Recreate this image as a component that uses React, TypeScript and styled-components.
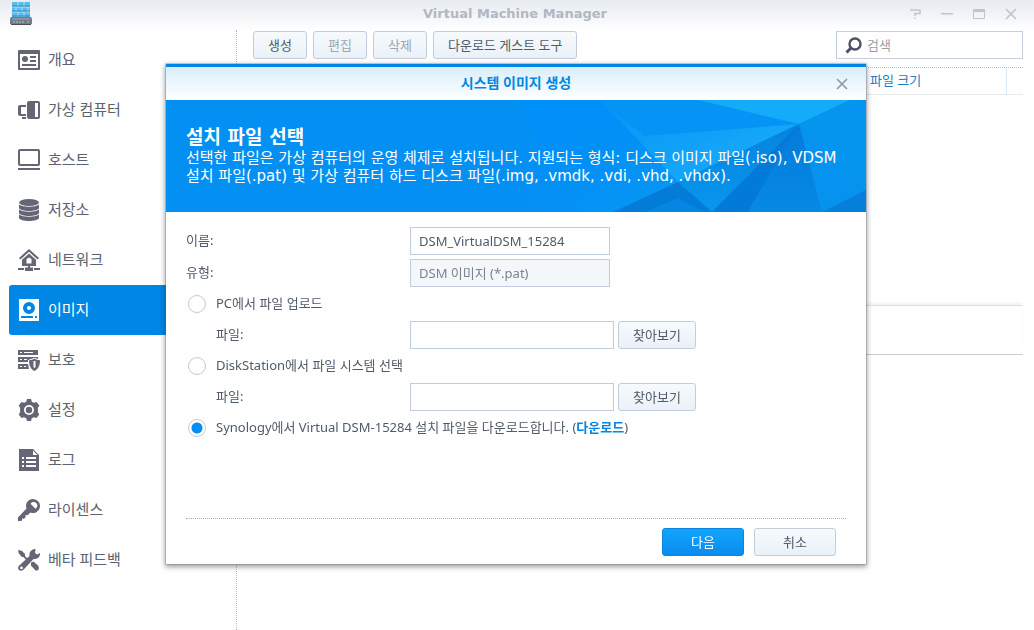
import React from "react";
import styled, { createGlobalStyle, css } from "styled-components";

const GlobalStyle = createGlobalStyle`
  *, *::before, *::after { box-sizing: border-box; }
  html, body { margin: 0; padding: 0; }
  body, button, input {
    font-family: "Noto Sans", "Noto Sans CJK KR", sans-serif;
    font-size: 13px;
    line-height: 18px;
    color: #505a68;
  }
  body { background: #fff; word-break: keep-all; }
`;

const Window = styled.div`
  display: flex;
  flex-direction: column;
  min-height: 100vh;
  background: #fff;
`;

const TitleBar = styled.header`
  display: grid;
  grid-template-columns: 1fr auto 1fr;
  align-items: center;
  height: 30px;
  padding: 0 14px 2px 10px;
  background: linear-gradient(#e8ecf1, #eef1f5 35%, #ffffff);
`;

const AppTitle = styled.h1`
  margin: 0;
  font-family: "DejaVu Sans", sans-serif;
  font-size: 13px;
  font-weight: bold;
  line-height: 18px;
  color: #b1b8bf;
`;

const WindowControls = styled.div`
  display: flex;
  justify-content: flex-end;
  gap: 14px;
`;

const IconButton = styled.button<{ $tone: string }>`
  display: flex;
  align-items: center;
  justify-content: center;
  width: 18px;
  height: 18px;
  padding: 0;
  border: 0;
  background: none;
  color: ${(p) => p.$tone};
`;

const Columns = styled.div`
  display: flex;
  flex: 1;
`;

const Sidebar = styled.nav`
  flex: 0 0 237px;
  padding: 5px 0 0 9px;
  border-right: 1px dotted #b4b9c2;
`;

const NavItem = styled.a<{ $active?: boolean }>`
  display: flex;
  align-items: center;
  gap: 8px;
  height: 50px;
  padding: 0 9px;
  font-size: 15px;
  line-height: 20px;
  text-decoration: none;
  color: #5a6370;
  border-radius: 3px 0 0 3px;
  svg { color: #646675; }
  span { padding-bottom: 2px; }
  ${(p) =>
    p.$active &&
    css`
      background: #0086e5;
      color: #fff;
      svg { color: #fff; }
    `}
`;

const Main = styled.main`
  flex: 1;
  display: flex;
  flex-direction: column;
  min-width: 0;
  padding: 1px 11px 0 0;
`;

const Toolbar = styled.div`
  display: flex;
  gap: 6px;
  padding: 0 0 8px 16px;
`;

const PlainButton = styled.button<{ $wide?: boolean }>`
  height: 28px;
  min-width: ${(p) => (p.$wide ? "82px" : "54px")};
  padding: 0 14px;
  border: 1px solid #c3ccda;
  border-radius: 3px;
  background: linear-gradient(#f7fafd, #eaf1f7);
  white-space: nowrap;
  &:disabled { color: #9aa6b2; }
`;

const PrimaryButton = styled(PlainButton)`
  border-color: #0a84e0;
  background: linear-gradient(#12a5fa, #0a8bf0);
  color: #fff;
`;

const SearchBox = styled.label`
  display: flex;
  align-items: center;
  gap: 5px;
  width: 187px;
  height: 28px;
  margin-left: auto;
  padding: 0 8px;
  border: 1px solid #c6ceda;
  background: #fff;
  color: #4b5263;
`;

const SearchInput = styled.input`
  flex: 1;
  min-width: 0;
  padding: 0;
  border: 0;
  outline: 0;
  background: none;
  &::placeholder { color: #98a0aa; opacity: 1; }
`;

const ListArea = styled.section`
  min-height: 238px;
`;

const ListTable = styled.table`
  width: 100%;
  table-layout: fixed;
  border-collapse: separate;
  border-spacing: 0;
  border-top: 1px dotted #b6c0cb;
  border-bottom: 1px solid #e6ebf0;
`;

const ListHead = styled.th<{ $width?: number }>`
  width: ${(p) => (p.$width ? `${p.$width}px` : "auto")};
  height: 26px;
  padding: 0 4px 2px;
  border-right: 1px solid #dce9f3;
  font-weight: normal;
  text-align: left;
  color: #1f7cc4;
  &:last-child { border-right: 0; }
`;

const DetailPanel = styled.section`
  height: 50px;
  border-top: 1px solid #dddfe3;
  border-bottom: 1px solid #c9ccd3;
  box-shadow: 0 -3px 3px -1px #f0f1f3;
`;

const Overlay = styled.div`
  position: fixed;
  inset: 0;
  display: flex;
  align-items: flex-start;
  padding: 64px 168px 0 166px;
`;

const Dialog = styled.div`
  flex: 1;
  min-width: 0;
  border-top: 3px solid #0086e5;
  background: #fff;
  box-shadow: 0 0 0 1px rgba(80, 90, 110, 0.25), 0 2px 5px 1px rgba(40, 45, 60, 0.45);
`;

const DialogHeader = styled.header`
  display: grid;
  grid-template-columns: 1fr auto 1fr;
  align-items: center;
  height: 33px;
  padding: 0 15px;
  background: linear-gradient(#d9eefb, #ffffff);
  h2 {
    grid-column: 2;
    margin: 0;
    padding-bottom: 2px;
    font-size: 14px;
    line-height: 18px;
    font-weight: bold;
    color: #0086e5;
  }
  button { justify-self: end; }
`;

const Banner = styled.div`
  position: relative;
  height: 112px;
  padding: 25px 20px 0;
  background: #048ff2;
  color: #fff;
  font-family: "DejaVu Sans", "Noto Sans CJK KR", sans-serif;
  overflow: hidden;
  h3, p { position: relative; margin: 0; }
  h3 { font-size: 19px; line-height: 24px; font-weight: bold; }
  p { font-size: 15px; line-height: 18px; }
`;

const BannerArt = styled.svg`
  position: absolute;
  top: 0;
  right: 0;
  width: 440px;
  height: 112px;
`;

const FormBody = styled.form`
  display: flex;
  flex-direction: column;
  gap: 3px;
  min-height: 307px;
  margin: 0 20px;
  padding-top: 15px;
  border-bottom: 1px dotted #a9adb4;
`;

const FieldPair = styled.div`
  display: grid;
  gap: 4px;
`;

const Field = styled.div<{ $indent?: boolean }>`
  display: flex;
  align-items: center;
  gap: 4px;
  height: 28px;
  label {
    flex: 0 0 220px;
    padding-bottom: 2px;
    padding-left: ${(p) => (p.$indent ? "30px" : "0")};
  }
`;

const TextInput = styled.input<{ $short?: boolean }>`
  width: ${(p) => (p.$short ? "200px" : "204px")};
  height: 28px;
  padding: 0 8px;
  border: 1px solid #c3ccda;
  background: #fff;
  outline: 0;
  &:disabled { background: #f4f7fa; color: #7a838e; padding-bottom: 2px; }
`;

const Choice = styled.label`
  display: flex;
  align-items: center;
  gap: 10px;
  height: 28px;
  padding-left: 2px;
  span { padding-bottom: 2px; }
  a { color: #0086e5; font-weight: bold; text-decoration: none; }
`;

const Radio = styled.input.attrs({ type: "radio" })`
  appearance: none;
  width: 18px;
  height: 18px;
  margin: 0;
  border: 1px solid #c0c9d6;
  border-radius: 50%;
  background: #fff;
  &:checked { background: radial-gradient(circle, #0090f5 5px, #fff 6px); }
`;

const DialogFooter = styled.footer`
  display: flex;
  justify-content: flex-end;
  gap: 10px;
  padding: 9px 30px 8px;
`;

type IconProps = { children: React.ReactNode };
const NavIcon = ({ children }: IconProps) => (
  <svg width="22" height="22" viewBox="0 0 22 22" fill="currentColor" aria-hidden="true">
    {children}
  </svg>
);

const icons = {
  overview: (
    <NavIcon>
      <path fillRule="evenodd" d="M1 1h20a1 1 0 0 1 1 1v18a1 1 0 0 1-1 1H1a1 1 0 0 1-1-1V2a1 1 0 0 1 1-1zM2 5v14h18V5z" />
      <circle cx="7" cy="10" r="3" />
      <path d="M12 7h6v2h-6zM12 11h6v2h-6zM4 15h14v2H4z" />
    </NavIcon>
  ),
  vm: (
    <NavIcon>
      <path fillRule="evenodd" d="M11 2h9a2 2 0 0 1 2 2v14a2 2 0 0 1-2 2h-9a2 2 0 0 1-2-2V4a2 2 0 0 1 2-2zm6 2v14h3V4z" />
      <path d="M2 6h6v2H3v7h5v2H2a2 2 0 0 1-2-2V8a2 2 0 0 1 2-2zM4 18h4v2H4z" />
    </NavIcon>
  ),
  host: (
    <NavIcon>
      <path fillRule="evenodd" d="M2 0h18a2 2 0 0 1 2 2v13a2 2 0 0 1-2 2H2a2 2 0 0 1-2-2V2a2 2 0 0 1 2-2zm0 2v13h18V2zM0 19h22v2H0z" />
    </NavIcon>
  ),
  storage: (
    <NavIcon>
      <ellipse cx="11" cy="3.500" rx="10" ry="3.500" />
      <path d="M1 5.500c4 3 16 3 20 0V9c-1 4-19 4-20 0zM1 10.500c4 3 16 3 20 0V14c-1 4-19 4-20 0zM1 15.500c4 3 16 3 20 0V19c-1 4-19 4-20 0z" />
    </NavIcon>
  ),
  network: (
    <NavIcon>
      <path d="M11 0l10 9-1.400 1.500L11 2.800 2.400 10.500 1 9z" />
      <path fillRule="evenodd" d="M11 4.500l7 6.300V17H4v-6.200zM8.500 10v4.500h5V10L11 8.500z" />
      <path d="M0 19h6v2H0zM16 19h6v2h-6zM7 18.500h8V22H7zM10 16h2v3h-2z" />
    </NavIcon>
  ),
  image: (
    <NavIcon>
      <path fillRule="evenodd" d="M1 0h20v22H1zM11 3a6 6 0 1 0 0 12 6 6 0 0 0 0-12zM3 17v2h12v-2zm14 0v2h2v-2z" />
      <circle cx="11" cy="9" r="2" />
    </NavIcon>
  ),
  protection: (
    <NavIcon>
      <path fillRule="evenodd" d="M0 1h20v5H0zM2 3v1h2V3zM6 3v1h9V3zM0 8h20v2l-3.500-1.200L10 11v2H0zm2 2v1h2v-1zm4 0v1h3v-1zM0 15h10l1 5H0zm2 2v1h2v-1zm4 0v1h2v-1z" />
      <path fillRule="evenodd" d="M16.500 9.500c1.500 1.200 3.200 1.700 5.500 1.700 0 5-1.500 8.800-5.500 10.800-4-2-5.500-5.800-5.500-10.800 2.300 0 4-.5 5.500-1.700zM15.500 12v6l1 1 1-1v-6z" />
    </NavIcon>
  ),
  settings: (
    <NavIcon>
      <path
        fillRule="evenodd"
        d="M9 0h4l.8 2.800 2 1L18.500 3l2.800 3.500-1.500 2.400.2 2.100-.2 2.100 1.500 2.400-2.800 3.500-2.700-.8-2 1L13 22H9l-.8-2.800-2-1-2.700.8-2.800-3.500 1.500-2.400L2 11l.2-2.100L.7 6.500 3.500 3l2.700.8 2-1zM11 6a5 5 0 1 0 0 10 5 5 0 0 0 0-10z"
      />
      <circle cx="11" cy="11" r="3.200" />
    </NavIcon>
  ),
  log: (
    <NavIcon>
      <path fillRule="evenodd" d="M1 0h14l6 6v16H1zM4 8v2h2V8zm4 0v2h10V8zm-4 4v2h2v-2zm4 0v2h10v-2zm-4 4v2h2v-2zm4 0v2h10v-2zM15 1.500V6h4.500z" />
    </NavIcon>
  ),
  license: (
    <NavIcon>
      <path
        fillRule="evenodd"
        d="M15 0a7 7 0 1 1-2.600 13.500L9.500 16.300l-2-.2.200 2-1.700 1.600-2-.2.200 1.500-1 1H0v-3.600L8.500 9.600A7 7 0 0 1 15 0zM14 3.200l-1.500 1.500 5 5L19 8.200c1.500-4-2-6-5-5z"
      />
    </NavIcon>
  ),
  feedback: (
    <NavIcon>
      <path d="M1 1l3 1 3 3v2l3 3-1.500 1.500L5.500 8H4L1.200 5 0 2z" />
      <path d="M13 13.500l2.500-1L20 16.500c1.500 2 1 4-.5 5h-2l-4.500-5z" />
      <path
        fillRule="evenodd"
        d="M17.500 0l-.5 4 2 1.500 3-1.500c.3 4-2.500 6.500-6.500 6L5.500 20.700C4 22 2 22 .8 20.800-.3 19.600 0 17.500 1.300 16.500L11.500 7c-.5-4 2-7 6-7zM3.500 17.500a1.400 1.400 0 1 0 0 2.800 1.400 1.400 0 0 0 0-2.800z"
      />
    </NavIcon>
  ),
};

const navItems: { icon: keyof typeof icons; label: string; active?: boolean }[] = [
  { icon: "overview", label: "개요" },
  { icon: "vm", label: "가상 컴퓨터" },
  { icon: "host", label: "호스트" },
  { icon: "storage", label: "저장소" },
  { icon: "network", label: "네트워크" },
  { icon: "image", label: "이미지", active: true },
  { icon: "protection", label: "보호" },
  { icon: "settings", label: "설정" },
  { icon: "log", label: "로그" },
  { icon: "license", label: "라이센스" },
  { icon: "feedback", label: "베타 피드백" },
];

const AppLogo = () => (
  <svg width="22" height="24" viewBox="0 0 22 24" aria-hidden="true">
    <path d="M2 0h18v16H2z" fill="#58bdec" />
    <path d="M2 5h18M2 10h18M8 0v5M14 0v5M6 5v5M12 5v5M18 5v5M8 10v6M14 10v6" stroke="#a9e2fa" strokeWidth="1" />
    <path d="M2 4h18M2 9h18M2 14h18" stroke="#3187c4" strokeWidth="1" />
    <path d="M1 15h20l1 2v5H0v-5z" fill="#777b87" />
    <path d="M2 17h18" stroke="#a5a9b2" />
    <path d="M3 20h11M17 20h2" stroke="#b9bdc6" strokeDasharray="2 1" />
    <path d="M1 22h20v1H1z" fill="#4b4e59" />
  </svg>
);

const CloseIcon = ({ size }: { size: number }) => (
  <svg width={size} height={size} viewBox="0 0 12 12" fill="none" stroke="currentColor" strokeWidth="1.600" aria-hidden="true">
    <path d="M1 1l10 10M11 1L1 11" />
  </svg>
);

export default function App() {
  return (
    <>
      <GlobalStyle />
      <Window>
        <TitleBar>
          <AppLogo />
          <AppTitle>Virtual Machine Manager</AppTitle>
          <WindowControls>
            <IconButton $tone="#c0c5ca" aria-label="도움말">
              <svg width="12" height="12" viewBox="0 0 12 12" fill="none" stroke="currentColor" strokeWidth="1.500">
                <path d="M1 2h10v3.500H6V8M6 9.500V11" />
              </svg>
            </IconButton>
            <IconButton $tone="#c0c5ca" aria-label="최소화">
              <svg width="12" height="12" viewBox="0 0 12 12" fill="currentColor">
                <path d="M0 5h12v1.500H0z" />
              </svg>
            </IconButton>
            <IconButton $tone="#c0c5ca" aria-label="최대화">
              <svg width="12" height="12" viewBox="0 0 12 12" fill="none" stroke="currentColor">
                <path d="M.5 2v8.500h11V2" />
                <path d="M0 2.500h12" strokeWidth="3" />
              </svg>
            </IconButton>
            <IconButton $tone="#c0c5ca" aria-label="닫기">
              <CloseIcon size={12} />
            </IconButton>
          </WindowControls>
        </TitleBar>
        <Columns>
          <Sidebar>
            {navItems.map((item) => (
              <NavItem key={item.icon} href={`#${item.icon}`} $active={item.active}>
                {icons[item.icon]}
                <span>{item.label}</span>
              </NavItem>
            ))}
          </Sidebar>
          <Main>
            <Toolbar>
              <PlainButton>생성</PlainButton>
              <PlainButton disabled>편집</PlainButton>
              <PlainButton disabled>삭제</PlainButton>
              <PlainButton>다운로드 게스트 도구</PlainButton>
              <SearchBox>
                <svg width="17" height="17" viewBox="0 0 17 17" fill="none" stroke="currentColor" aria-hidden="true">
                  <circle cx="10" cy="7" r="5.500" strokeWidth="2.400" />
                  <path d="M6 11l-4.500 4.500" strokeWidth="3" />
                </svg>
                <SearchInput type="search" placeholder="검색" aria-label="검색" />
              </SearchBox>
            </Toolbar>
            <ListArea>
              <ListTable>
                <thead>
                  <tr>
                    <ListHead />
                    <ListHead $width={141}>파일 크기</ListHead>
                    <ListHead $width={16} />
                  </tr>
                </thead>
              </ListTable>
            </ListArea>
            <DetailPanel />
          </Main>
        </Columns>
      </Window>
      <Overlay>
        <Dialog role="dialog" aria-labelledby="dialog-title">
          <DialogHeader>
            <h2 id="dialog-title">시스템 이미지 생성</h2>
            <IconButton $tone="#8b99a6" aria-label="대화 상자 닫기">
              <CloseIcon size={12} />
            </IconButton>
          </DialogHeader>
          <Banner>
            <BannerArt viewBox="426 0 440 112" aria-hidden="true">
              <defs>
                <linearGradient id="facetLeft" x1="0" y1="0" x2="1" y2="0">
                  <stop offset="0" stopColor="#048ff2" />
                  <stop offset="1" stopColor="#0490f4" />
                </linearGradient>
                <linearGradient id="facetMiddle" x1="0" y1="0" x2="1" y2="1">
                  <stop offset="0" stopColor="#0090fa" />
                  <stop offset="0.500" stopColor="#0290f6" />
                  <stop offset="1" stopColor="#0897f3" />
                </linearGradient>
                <linearGradient id="facetGlow" x1="0" y1="0" x2="1" y2="1">
                  <stop offset="0" stopColor="#0592f6" />
                  <stop offset="0.600" stopColor="#12a5f8" />
                  <stop offset="1" stopColor="#16a9f9" />
                </linearGradient>
                <linearGradient id="facetDeep" x1="0" y1="0" x2="0" y2="1">
                  <stop offset="0" stopColor="#037bd9" />
                  <stop offset="1" stopColor="#0789e6" />
                </linearGradient>
                <linearGradient id="facetBase" x1="0" y1="0" x2="0" y2="1">
                  <stop offset="0" stopColor="#0583df" />
                  <stop offset="1" stopColor="#0897ee" />
                </linearGradient>
              </defs>
              <path d="M426 0h94l53 112H450z" fill="url(#facetLeft)" />
              <path d="M520 0h93l65 82-65 30h-40z" fill="url(#facetMiddle)" />
              <path d="M600 0h98l101 24-121 58z" fill="url(#facetGlow)" />
              <path d="M600 0h98l101 24-155 12z" fill="#0593f6" />
              <path d="M698 0h152l-51 24z" fill="#14acf9" />
              <path d="M850 0h16v90L799 24z" fill="#0595ef" />
              <path d="M799 24L690 76l-12 6 34 30z" fill="url(#facetBase)" />
              <path d="M678 82l34 30h-99z" fill="#037cd8" />
              <path d="M678 98l26 14h-60z" fill="#0685e2" />
              <path d="M799 24l-87 88h36z" fill="#027ad7" />
              <path d="M799 24l-51 88h74z" fill="url(#facetDeep)" />
              <path d="M799 24l23 88h12l32-22z" fill="#0693ef" />
              <path d="M866 90v22h-44z" fill="#047fda" />
            </BannerArt>
            <h3>설치 파일 선택</h3>
            <p>
              선택한 파일은 가상 컴퓨터의 운영 체제로 설치됩니다. 지원되는 형식: 디스크 이미지 파일(.iso), VDSM 설치 파일(.pat) 및 가상
              컴퓨터 하드 디스크 파일(.img, .vmdk, .vdi, .vhd, .vhdx).
            </p>
          </Banner>
          <FormBody id="image-form">
            <FieldPair>
              <Field>
                <label htmlFor="image-name">이름:</label>
                <TextInput $short id="image-name" type="text" defaultValue="DSM_VirtualDSM_15284" />
              </Field>
              <Field>
                <label htmlFor="image-type">유형:</label>
                <TextInput $short id="image-type" type="text" defaultValue="DSM 이미지 (*.pat)" disabled />
              </Field>
            </FieldPair>
            <Choice>
              <Radio name="source" />
              <span>PC에서 파일 업로드</span>
            </Choice>
            <Field $indent>
              <label htmlFor="pc-file">파일:</label>
              <TextInput id="pc-file" type="text" />
              <PlainButton type="button">찾아보기</PlainButton>
            </Field>
            <Choice>
              <Radio name="source" />
              <span>DiskStation에서 파일 시스템 선택</span>
            </Choice>
            <Field $indent>
              <label htmlFor="ds-file">파일:</label>
              <TextInput id="ds-file" type="text" />
              <PlainButton type="button">찾아보기</PlainButton>
            </Field>
            <Choice>
              <Radio name="source" defaultChecked />
              <span>
                Synology에서 Virtual DSM-15284 설치 파일을 다운로드합니다. (<a href="#download">다운로드</a>)
              </span>
            </Choice>
          </FormBody>
          <DialogFooter>
            <PrimaryButton $wide form="image-form">다음</PrimaryButton>
            <PlainButton $wide type="button">취소</PlainButton>
          </DialogFooter>
        </Dialog>
      </Overlay>
    </>
  );
}
